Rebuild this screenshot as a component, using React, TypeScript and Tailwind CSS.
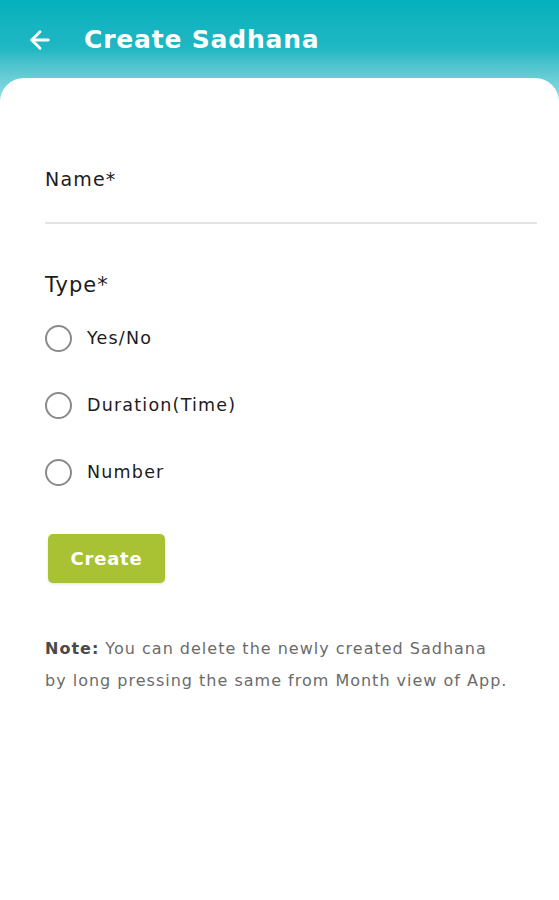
import { ArrowLeft } from "lucide-react";

const options = ["Yes/No", "Duration(Time)", "Number"];

export default function App() {
  return (
    <div
      className="min-h-[900px] w-full bg-white"
      style={{ fontFamily: "'DejaVu Sans', Verdana, sans-serif" }}
    >
      {/* header */}
      <div className="bg-gradient-to-b from-[#04b0bd] via-[#1fb8c4] to-[#8fdde3] pt-[24px] pb-[44px]">
        <div className="flex items-center h-[32px] px-[26px]">
          <ArrowLeft className="w-[28px] h-[28px] text-white" strokeWidth={2.5} />
          <h1 className="ml-[30px] text-[25px] font-bold text-white tracking-[0.8px]">
            Create Sadhana
          </h1>
        </div>
      </div>

      {/* card */}
      <div className="-mt-[22px] rounded-t-[24px] bg-white px-[45px] pt-[88px] min-h-[820px]">
        <label className="block text-[19px] leading-[26px] tracking-[1.2px] text-[#1c1c1c]">Name*</label>
        <div className="mt-[30px] mr-[-23px] h-[2px] bg-[#e4e4e4]" />

        <div className="mt-[47px] text-[21px] leading-[28px] tracking-[1px] text-[#1c1c1c]">Type*</div>

        <div className="mt-[26px] flex flex-col gap-[40px]">
          {options.map((o) => (
            <div key={o} className="flex items-center h-[27px]">
              <span className="w-[27px] h-[27px] rounded-full border-[2.5px] border-[#8a8a8a]" />
              <span className="ml-[15px] text-[17.5px] tracking-[1.2px] text-[#1c1c1c]">{o}</span>
            </div>
          ))}
        </div>

        <button
          type="button"
          className="mt-[48px] ml-[3px] w-[117px] h-[49px] rounded-[5px] bg-[#a9c233] text-white text-[18px] font-bold tracking-[0.8px] shadow-sm"
        >
          Create
        </button>

        <p className="mt-[50px] text-[16px] leading-[32px] tracking-[1px] text-[#6b6b6b]">
          <span className="font-bold text-[#4a4a4a]">Note:</span> You can delete the newly created Sadhana
          <br />
          by long pressing the same from Month view of App.
        </p>
      </div>
    </div>
  );
}
